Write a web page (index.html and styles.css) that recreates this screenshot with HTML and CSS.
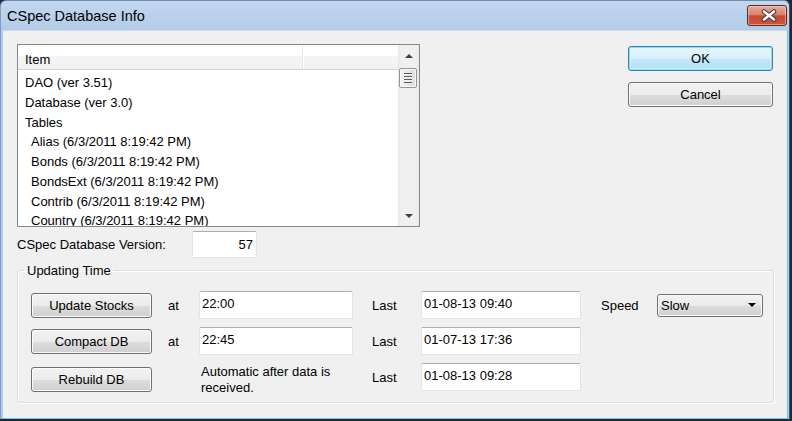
FILE: index.html
```html
<!DOCTYPE html>
<html>
<head>
<meta charset="utf-8">
<title>CSpec Database Info</title>
<link rel="stylesheet" href="styles.css">
</head>
<body>
<div class="window">
  <div class="titlebar">
    <span class="title">CSpec Database Info</span>
    <div class="close">
      <svg width="16" height="13" viewBox="0 0 16 13">
        <path d="M3 2.5 L13 10.5 M13 2.5 L3 10.5" stroke="#4a3434" stroke-width="4.6" stroke-linecap="round" fill="none"/>
        <path d="M3 2.5 L13 10.5 M13 2.5 L3 10.5" stroke="#ffffff" stroke-width="2.6" stroke-linecap="round" fill="none"/>
      </svg>
    </div>
  </div>
  <div class="client">
    <div class="top">
      <div class="leftcol">
        <div class="listbox">
          <div class="listmain">
            <div class="listhead">
              <div class="hcol">Item</div>
              <div class="hcol rest"></div>
            </div>
            <div class="rows">
              <div class="row">DAO (ver 3.51)</div>
              <div class="row">Database (ver 3.0)</div>
              <div class="row">Tables</div>
              <div class="row sub">Alias (6/3/2011 8:19:42 PM)</div>
              <div class="row sub">Bonds (6/3/2011 8:19:42 PM)</div>
              <div class="row sub">BondsExt (6/3/2011 8:19:42 PM)</div>
              <div class="row sub">Contrib (6/3/2011 8:19:42 PM)</div>
              <div class="row sub">Country (6/3/2011 8:19:42 PM)</div>
            </div>
          </div>
          <div class="vscroll">
            <div class="sbtn"><span class="arrow-up"></span></div>
            <div class="track">
              <div class="thumb"><span class="grip"></span></div>
            </div>
            <div class="sbtn"><span class="arrow-down"></span></div>
          </div>
        </div>
        <div class="version">
          <span class="vlabel">CSpec Database Version:</span>
          <div class="edit num">57</div>
        </div>
      </div>
      <div class="rightcol">
        <button class="btn default">OK</button>
        <button class="btn">Cancel</button>
      </div>
    </div>
    <fieldset class="group">
      <legend>Updating Time</legend>
      <div class="grid">
        <button class="btn gbtn">Update Stocks</button>
        <span class="lbl at">at</span>
        <div class="edit time">22:00</div>
        <span class="lbl last">Last</span>
        <div class="edit time">01-08-13 09:40</div>
        <span class="lbl speed">Speed</span>
        <div class="combo"><span>Slow</span><span class="arrow-down dark"></span></div>

        <button class="btn gbtn">Compact DB</button>
        <span class="lbl at">at</span>
        <div class="edit time">22:45</div>
        <span class="lbl last">Last</span>
        <div class="edit time">01-07-13 17:36</div>
        <span></span>
        <span></span>

        <button class="btn gbtn low">Rebuild DB</button>
        <span></span>
        <div class="auto">Automatic after data is received.</div>
        <span class="lbl last">Last</span>
        <div class="edit time">01-08-13 09:28</div>
        <span></span>
        <span></span>
      </div>
    </fieldset>
  </div>
</div>
</body>
</html>
```
FILE: styles.css
```css
* { box-sizing: border-box; }

body {
  margin: 0;
  background: #1c2a37;
  font-family: "Liberation Sans", Arial, sans-serif;
  font-size: 13px;
  color: #000;
}

.window {
  width: 790px;
  height: 419px;
  display: flex;
  flex-direction: column;
  background: linear-gradient(to bottom, #c2d6ee 0px, #b3cbe8 30px, #b3cbe8 100%);
  border-left: 1px solid #7f9dc2;
  border-bottom: 1px solid #6cc6ee;
  border-right: 1px solid #44576e;
  border-top: 1px solid #6f8cb0;
  border-radius: 6px 6px 0 0;
  padding-left: 2px;
  padding-right: 1px;
}

.titlebar {
  height: 29px;
  display: flex;
  align-items: flex-start;
  flex: none;
}

.title {
  font-size: 14.5px;
  line-height: 17px;
  margin-top: 7px;
  padding-left: 4px;
  color: #000;
}

.close {
  margin-left: auto;
  margin-right: 1px;
  margin-top: 4px;
  width: 40px;
  height: 21px;
  border: 1px solid #5e2820;
  border-radius: 3px;
  background: linear-gradient(to bottom, #e8ab9c 0%, #d98371 45%, #c64a32 52%, #c9573d 100%);
  box-shadow: inset 0 0 0 1px rgba(255, 230, 220, 0.45);
  display: flex;
  align-items: center;
  justify-content: center;
  padding-left: 3px;
}

.client {
  flex: 1;
  background: #f0f0f0;
  padding: 13px 13px 0 14px;
  border-top: 1px solid #cbdbee;
  border-right: 1px solid #6cc6ee;
}

.top {
  display: flex;
}

.leftcol {
  width: 403px;
}

.listbox {
  width: 403px;
  height: 183px;
  border: 1px solid #828790;
  background: #fff;
  display: flex;
}

.listmain {
  flex: 1;
  display: flex;
  flex-direction: column;
  overflow: hidden;
}

.listhead {
  height: 25px;
  flex: none;
  display: flex;
  background: linear-gradient(to bottom, #ffffff 0%, #ffffff 45%, #f4f5f7 46%, #f1f2f4 100%);
  border-bottom: 1px solid #d5d5d5;
}

.hcol {
  width: 285px;
  border-right: 1px solid #e3e5e8;
  box-shadow: 1px 0 0 #fff;
  padding: 5px 0 0 7px;
  line-height: 19px;
}

.hcol.rest {
  flex: 1;
  border-right: none;
  box-shadow: none;
}

.rows {
  flex: 1;
  overflow: hidden;
  padding-top: 3px;
}

.row {
  line-height: 19.75px;
  height: 19.75px;
  padding-left: 7px;
  white-space: nowrap;
}

.row.sub {
  padding-left: 13px;
}

.vscroll {
  width: 21px;
  flex: none;
  display: flex;
  flex-direction: column;
  background: linear-gradient(to right, #e6e6e6 0, #f0f0f0 3px, #f0f0f0 18px, #e9e9e9 100%);
}

.sbtn {
  height: 21px;
  flex: none;
  display: flex;
  align-items: center;
  justify-content: center;
}

.arrow-up {
  width: 0;
  height: 0;
  border-left: 4px solid transparent;
  border-right: 4px solid transparent;
  border-bottom: 4px solid #404040;
}

.arrow-down {
  width: 0;
  height: 0;
  border-left: 4px solid transparent;
  border-right: 4px solid transparent;
  border-top: 4px solid #404040;
}

.arrow-down.dark {
  border-top: 4px solid #000;
}

.track {
  flex: 1;
}

.thumb {
  margin: 2px 2px 0 1px;
  height: 20px;
  border: 1px solid #959595;
  border-radius: 2px;
  background: linear-gradient(to right, #f3f3f3 0%, #e9e9e9 50%, #dcdcdc 100%);
  box-shadow: inset 0 0 0 1px #fafafa;
  display: flex;
  align-items: center;
  justify-content: center;
}

.grip {
  width: 8px;
  height: 10px;
  background: repeating-linear-gradient(to bottom, #5c5c5c 0, #5c5c5c 1px, #f4f4f4 1px, #f4f4f4 2px, transparent 2px, transparent 3px);
}

.version {
  display: flex;
  align-items: center;
  margin-top: 4px;
}

.vlabel {
  width: 175px;
}

.edit {
  background: #fff;
  border: 1px solid #e2e3ea;
  border-top-color: #abadb3;
  border-radius: 2px;
  line-height: 15px;
  white-space: nowrap;
}

.edit.num {
  width: 65px;
  height: 27px;
  text-align: right;
  padding: 5px 3px 0 0;
}

.edit.time {
  height: 28px;
  padding: 4px 0 0 2px;
}

.rightcol {
  margin-left: auto;
  margin-right: 1px;
  padding-top: 2px;
  display: flex;
  flex-direction: column;
  gap: 11px;
}

.btn {
  font-family: inherit;
  font-size: 13px;
  color: #000;
  padding: 0;
  height: 25px;
  border: 1px solid #707070;
  border-radius: 3px;
  background: linear-gradient(to bottom, #f2f2f2 0%, #ebebeb 50%, #dddddd 51%, #cfcfcf 100%);
  box-shadow: inset 0 0 0 1px #fbfbfb;
  text-align: center;
  line-height: 21px;
}

.rightcol .btn {
  width: 145px;
}

.btn.default {
  border-color: #3c7fb1;
  background: linear-gradient(to bottom, #e6f5fc 0%, #d8f0fb 50%, #c3e7f8 51%, #b5e0f5 100%);
  box-shadow: inset 0 0 0 1px #8fdcf7, inset 0 0 0 2px rgba(220, 245, 253, 0.6);
}

.group {
  margin: 5px 0 0 0;
  padding: 13px 0 11px 0;
  width: 757px;
  border: 1px solid #d5dfe5;
  border-radius: 3px;
  box-shadow: inset 1px 1px 0 #fff, 1px 1px 0 #fff;
}

.group legend {
  padding: 0 3px;
  margin-left: 6px;
  line-height: 15px;
}

.grid {
  margin-left: 13px;
  display: grid;
  grid-template-columns: 121px 47px 154px 68px 160px 76px 106px;
  grid-template-rows: 28px 28px 28px;
  row-gap: 8px;
}

.gbtn {
  width: 121px;
  align-self: center;
}

.gbtn.low {
  align-self: start;
  margin-top: 4px;
}

.lbl {
  align-self: center;
  line-height: 15px;
}

.lbl.at { padding-left: 16px; padding-top: 1px; }
.lbl.last { padding-left: 19px; }
.lbl.speed { padding-left: 20px; }

.auto {
  line-height: 16px;
  padding: 1px 0 0 2px;
  align-self: start;
}

.combo {
  align-self: center;
  height: 23px;
  border: 1px solid #707070;
  border-radius: 3px;
  background: linear-gradient(to bottom, #f2f2f2 0%, #ebebeb 50%, #dddddd 51%, #cfcfcf 100%);
  box-shadow: inset 0 0 0 1px #fbfbfb;
  display: flex;
  align-items: center;
  justify-content: space-between;
  padding: 0 6px 0 3px;
  line-height: 15px;
}
```
